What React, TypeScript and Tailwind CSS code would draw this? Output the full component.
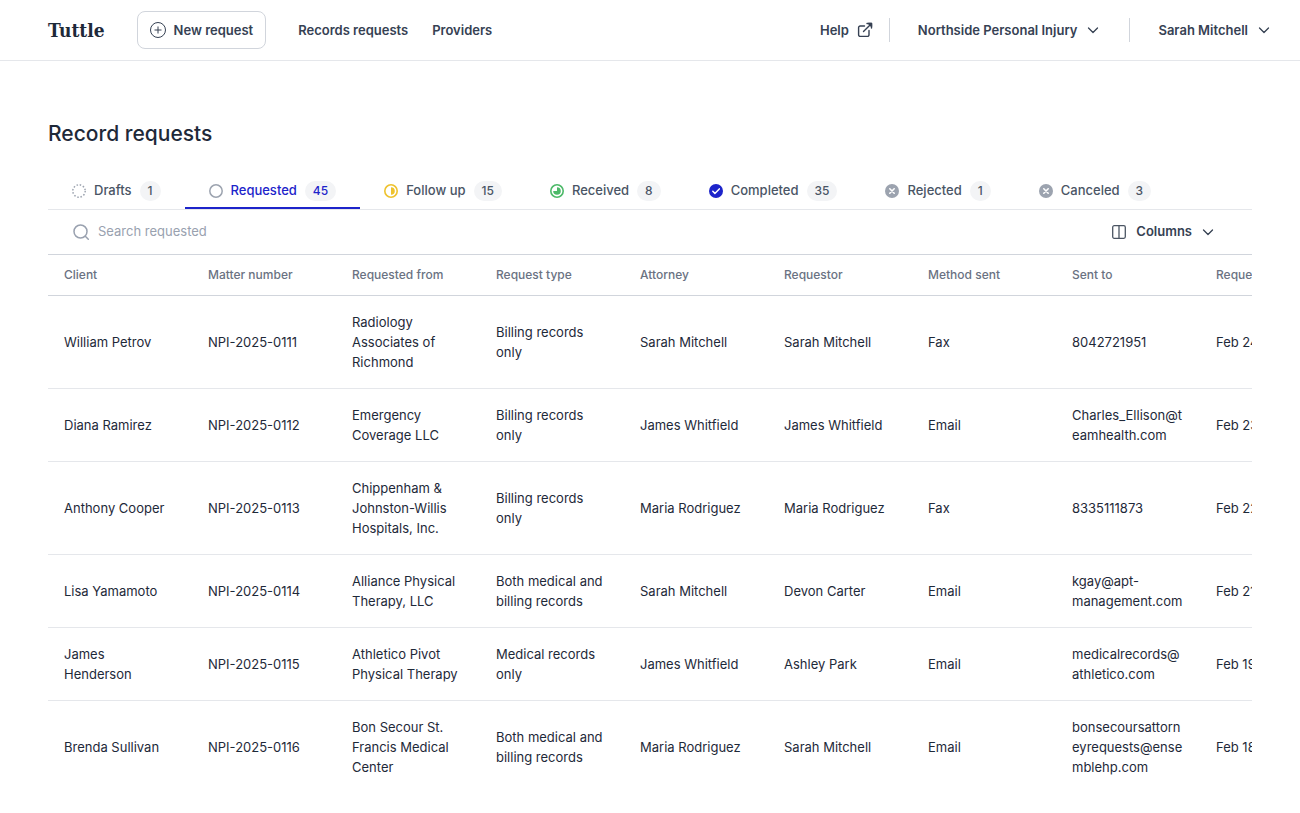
import type { ReactNode } from 'react';

type Tab = {
  label: string;
  count: number;
  icon: ReactNode;
};

const canceledIcon = (
  <svg viewBox="0 0 14 14" className="size-3.5" fill="none">
    <circle cx="7" cy="7" r="7" fill="#9ca3af" />
    <path d="M4.8 4.8l4.4 4.4M9.2 4.8L4.8 9.2" stroke="#fff" strokeWidth="1.6" strokeLinecap="round" />
  </svg>
);

const tabs: Tab[] = [
  {
    label: 'Drafts',
    count: 1,
    icon: (
      <svg viewBox="0 0 14 14" className="size-3.5" fill="none">
        <circle cx="7" cy="7" r="6.2" stroke="#9ca3af" strokeWidth="1.5" strokeDasharray="1.5 1.746" />
      </svg>
    ),
  },
  {
    label: 'Requested',
    count: 45,
    icon: (
      <svg viewBox="0 0 14 14" className="size-3.5" fill="none">
        <circle cx="7" cy="7" r="6.2" stroke="#9ca3af" strokeWidth="1.5" />
      </svg>
    ),
  },
  {
    label: 'Follow up',
    count: 15,
    icon: (
      <svg viewBox="0 0 14 14" className="size-3.5" fill="none">
        <circle cx="7" cy="7" r="6.2" stroke="#eec22e" strokeWidth="1.6" />
        <path d="M7 3.2a3.8 3.8 0 0 1 0 7.6z" fill="#eec22e" />
      </svg>
    ),
  },
  {
    label: 'Received',
    count: 8,
    icon: (
      <svg viewBox="0 0 14 14" className="size-3.5" fill="none">
        <circle cx="7" cy="7" r="6.2" stroke="#4cb968" strokeWidth="1.6" />
        <path d="M7 7V3.2A3.8 3.8 0 1 1 3.2 7z" fill="#4cb968" />
      </svg>
    ),
  },
  {
    label: 'Completed',
    count: 35,
    icon: (
      <svg viewBox="0 0 14 14" className="size-3.5" fill="none">
        <circle cx="7" cy="7" r="7" fill="#1d24ca" />
        <path d="M3.8 7.3l2.1 2.1 4.4-4.5" stroke="#fff" strokeWidth="1.5" strokeLinecap="round" strokeLinejoin="round" />
      </svg>
    ),
  },
  { label: 'Rejected', count: 1, icon: canceledIcon },
  { label: 'Canceled', count: 3, icon: canceledIcon },
];

const columns = [
  'Client',
  'Matter number',
  'Requested from',
  'Request type',
  'Attorney',
  'Requestor',
  'Method sent',
  'Sent to',
  'Requested on',
];

// \u200b marks the preferred break inside long addresses
const rows = [
  ['William Petrov', 'NPI-2025-0111', 'Radiology Associates of Richmond', 'Billing records only', 'Sarah Mitchell', 'Sarah Mitchell', 'Fax', '8042721951', 'Feb 24, 2026'],
  ['Diana Ramirez', 'NPI-2025-0112', 'Emergency Coverage LLC', 'Billing records only', 'James Whitfield', 'James Whitfield', 'Email', 'Charles_Ellison@t\u200beamhealth.com', 'Feb 23, 2026'],
  ['Anthony Cooper', 'NPI-2025-0113', 'Chippenham & Johnston-Willis Hospitals, Inc.', 'Billing records only', 'Maria Rodriguez', 'Maria Rodriguez', 'Fax', '8335111873', 'Feb 22, 2026'],
  ['Lisa Yamamoto', 'NPI-2025-0114', 'Alliance Physical Therapy, LLC', 'Both medical and billing records', 'Sarah Mitchell', 'Devon Carter', 'Email', 'kgay@apt-management.com', 'Feb 21, 2026'],
  ['James\nHenderson', 'NPI-2025-0115', 'Athletico Pivot Physical Therapy', 'Medical records only', 'James Whitfield', 'Ashley Park', 'Email', 'medicalrecords@\u200bathletico.com', 'Feb 19, 2026'],
  ['Brenda Sullivan', 'NPI-2025-0116', 'Bon Secour St. Francis Medical Center', 'Both medical and billing records', 'Maria Rodriguez', 'Sarah Mitchell', 'Email', 'bonsecoursattorn\u200beyrequests@ense\u200bmblehp.com', 'Feb 18, 2026'],
];

function ChevronDown() {
  return (
    <svg viewBox="0 0 12 12" className="size-3" fill="none">
      <path d="M1.5 4L6 8.5 10.5 4" stroke="currentColor" strokeWidth="1.3" strokeLinecap="round" strokeLinejoin="round" />
    </svg>
  );
}

function Header() {
  return (
    <header className="flex items-center justify-between border-b border-gray-200 py-[11px] pr-[30px] pl-12 text-[13px] leading-5 font-semibold text-gray-700">
      <div className="flex items-center">
        <a href="#" className="mr-8 font-['DejaVu_Serif_Condensed','DejaVu_Serif',serif] text-[19px] font-bold text-gray-800">
          Tuttle
        </a>
        <button className="mr-8 flex h-[38px] items-center gap-2 rounded-lg border border-gray-300 px-3">
          <svg viewBox="0 0 16 16" className="size-4" fill="none" stroke="currentColor">
            <circle cx="8" cy="8" r="7.5" />
            <path d="M8 4.5v7M4.5 8h7" />
          </svg>
          New request
        </button>
        <nav className="flex gap-6">
          <a href="#">Records requests</a>
          <a href="#">Providers</a>
        </nav>
      </div>
      <div className="flex items-center">
        <a href="#" className="flex items-center gap-2 pr-4">
          Help
          <svg viewBox="0 0 16 16" className="size-4" fill="none" stroke="currentColor" strokeWidth="1.4" strokeLinecap="round" strokeLinejoin="round">
            <path d="M7.5 4H3.2A1.6 1.6 0 0 0 1.6 5.6v7.200a1.600 1.600 0 0 0 1.600 1.600h7.200a1.600 1.600 0 0 0 1.600-1.600V8.500" />
            <path d="M10 1.5h4.500V6M14.300 1.700L6.500 9.500" />
            <path d="M11.500 1.500h3v3z" fill="currentColor" />
          </svg>
        </a>
        <button className="flex h-6 items-center gap-2.5 border-l border-gray-300 pr-[30px] pl-7">
          Northside Personal Injury
          <ChevronDown />
        </button>
        <button className="flex h-6 items-center gap-2.5 border-l border-gray-300 pl-7">
          Sarah Mitchell
          <ChevronDown />
        </button>
      </div>
    </header>
  );
}

function StatusTabs() {
  return (
    <div role="tablist" className="flex border-b border-gray-200">
      {tabs.map((tab) => {
        const active = tab.label === 'Requested';
        return (
          <button
            key={tab.label}
            role="tab"
            aria-selected={active}
            className={`flex items-center gap-2 border-b-2 px-6 pt-2 pb-1.5 text-[13px] font-medium ${
              active ? 'border-[#1d24ca] text-[#1d24ca]' : 'border-transparent text-gray-600'
            }`}
          >
            {tab.icon}
            {tab.label}
            <span className="rounded-full bg-gray-100 px-2 text-xs leading-5">{tab.count}</span>
          </button>
        );
      })}
    </div>
  );
}

function Toolbar() {
  return (
    <div className="flex h-11 items-center justify-between pr-[38px] pl-6 text-[13px]">
      <label className="flex flex-1 items-center gap-2 text-gray-400">
        <svg viewBox="0 0 18 18" className="size-[18px]" fill="none" stroke="currentColor" strokeWidth="1.5" strokeLinecap="round">
          <circle cx="8.5" cy="8.5" r="6.5" />
          <path d="M13.3 13.3l3 3" />
        </svg>
        <input
          type="text"
          aria-label="Search requested"
          placeholder="Search requested"
          className="flex-1 outline-none placeholder:text-gray-400"
        />
      </label>
      <button className="flex items-center gap-2.5 font-semibold text-gray-700">
        <svg viewBox="0 0 14 14" className="size-3.5" fill="none" stroke="#4b5563" strokeWidth="1.3">
          <rect x="0.7" y="0.7" width="12.6" height="12.6" rx="1.5" />
          <path d="M7 0.7v12.6" />
        </svg>
        Columns
        <ChevronDown />
      </button>
    </div>
  );
}

function RequestsTable() {
  return (
    <div className="overflow-x-auto [scrollbar-width:none]">
      <table className="w-[1296px] table-fixed text-left">
        <thead>
          <tr className="border-y border-gray-300">
            {columns.map((column) => (
              <th key={column} className="px-4 py-3 text-xs font-medium text-gray-500">
                {column}
              </th>
            ))}
          </tr>
        </thead>
        <tbody>
          {rows.map((row) => (
            <tr key={row[1]} className="border-b border-gray-200 last:border-b-0">
              {row.map((cell, index) => (
                <td key={index} className="px-4 py-4 text-[13px] leading-5 wrap-break-word whitespace-pre-line text-gray-800">
                  {cell}
                </td>
              ))}
            </tr>
          ))}
        </tbody>
      </table>
    </div>
  );
}

export default function App() {
  return (
    <div className="min-h-screen bg-white font-['Inter',sans-serif]">
      <Header />
      <main className="px-12 pt-[57px] pb-5">
        <h1 className="mb-[23px] text-[21px] leading-8 font-medium text-gray-800">Record requests</h1>
        <StatusTabs />
        <Toolbar />
        <RequestsTable />
      </main>
    </div>
  );
}
